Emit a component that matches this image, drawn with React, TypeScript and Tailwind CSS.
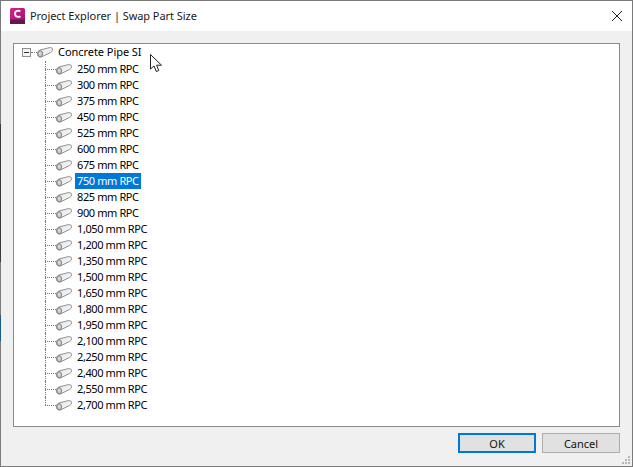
import React from "react";

const sizes = [
  "250", "300", "375", "450", "525", "600", "675", "750", "825", "900", "1,050",
  "1,200", "1,350", "1,500", "1,650", "1,800", "1,950", "2,100", "2,250", "2,400", "2,550", "2,700",
];

const PipeIcon = () => (
  <svg width="16" height="11" viewBox="0 0 16 11" className="shrink-0">
    <path d="M3 3 L12.5 0.6 C14.5 0.2 15.6 1.2 15.5 2.8 C15.4 4.2 14.6 5 13.5 5.5 L4.8 9.8 C2.6 10.6 0.5 9.6 0.5 7 C0.5 5 1.4 3.6 3 3 Z" fill="#efefef" stroke="#8f8f8f" strokeWidth="1" />
    <ellipse cx="3.2" cy="6.7" rx="2.4" ry="3" fill="#d2d2d2" stroke="#7a7a7a" strokeWidth="1" />
  </svg>
);

const Row = ({ size, last, selected }: { size: string; last: boolean; selected: boolean }) => (
  <div className="h-4 flex items-center ml-[31px]">
    <div className="relative w-[11px] h-4 shrink-0">
      <div className={`absolute left-0 top-0 border-l border-dotted border-[#777] ${last ? "h-2" : "h-4"}`} />
      <div className="absolute left-0 top-2 w-[11px] border-t border-dotted border-[#777]" />
    </div>
    <PipeIcon />
    <span className={`ml-[3px] h-4 px-[2px] leading-4 tracking-[-0.4px] whitespace-nowrap ${selected ? "bg-[#0078d7] text-white" : "text-black"}`}>
      {size} mm RPC
    </span>
  </div>
);

const App: React.FC = () => {
  return (
    <div className="relative w-[633px] h-[467px] flex flex-col bg-[#f0f0f0] border border-[#7a7a7a] text-[11px] font-['Noto_Sans',sans-serif]">
      <div className="h-[30px] shrink-0 bg-white flex items-center pl-[9px] pr-[10px]">
        <svg width="15" height="16" viewBox="0 0 15 16" className="shrink-0">
          <defs>
            <linearGradient id="civil" x1="0" y1="0" x2="1" y2="1">
              <stop offset="0" stopColor="#d0218c" />
              <stop offset="1" stopColor="#a5146a" />
            </linearGradient>
          </defs>
          <rect x="0" y="0" width="15" height="16" rx="1.5" fill="url(#civil)" />
          <rect x="0" y="11.5" width="15" height="4.5" fill="#5e1b49" />
          <path d="M10.4 3.4 C8.8 2.2 5 2.4 5 5.8 C5 9.2 8.8 9.4 10.4 8.2" fill="none" stroke="#fff" strokeWidth="1.8" />
        </svg>
        <span className="ml-[5px] tracking-[-0.06px] text-[#1a1a1a] whitespace-nowrap">Project Explorer | Swap Part Size</span>
        <svg width="10" height="10" viewBox="0 0 10 10" className="ml-auto">
          <path d="M0 0 L10 10 M10 0 L0 10" stroke="#222" strokeWidth="1" />
        </svg>
      </div>

      <div className="flex-1 flex flex-col px-[12px] pt-[12px] relative">
        <div className="h-[384px] bg-white border border-[#8a8a8a]">
          <div className="h-4 flex items-center pl-[8px] mb-px">
            <div className="w-[9px] h-[9px] border border-[#8e8f8f] bg-[#f4f4f4] flex items-center justify-center shrink-0">
              <div className="w-[5px] h-px bg-[#333]" />
            </div>
            <div className="w-[6px] border-t border-dotted border-[#777]" />
            <PipeIcon />
            <span className="ml-[5px] tracking-[-0.05px] text-black whitespace-nowrap">Concrete Pipe SI</span>
          </div>
          {sizes.map((s, i) => (
            <Row key={s} size={s} last={i === sizes.length - 1} selected={s === "750"} />
          ))}
        </div>

        <div className="flex justify-end gap-[6px] mt-[6px]">
          <button className="w-[78px] h-[20px] bg-[#e1e1e1] border-2 border-[#0078d7] text-[#111] leading-none">OK</button>
          <button className="w-[78px] h-[20px] bg-[#e1e1e1] border border-[#adadad] text-[#111] leading-none">Cancel</button>
        </div>

        <svg width="9" height="9" viewBox="0 0 9 9" className="absolute right-[1px] bottom-[1px]">
          <path d="M6 0h2v2H6zM3 3h2v2H3zM6 3h2v2H6zM0 6h2v2H0zM3 6h2v2H3zM6 6h2v2H6z" fill="#b8b8b8" />
        </svg>
      </div>

      {/* window behind shows through the 1px left edge */}
      <div className="absolute left-[-1px] top-[123px] w-px h-[138px] bg-[#3a3a3a]" />
      <div className="absolute left-[-1px] top-[314px] w-px h-[26px] bg-[#1a5a8a]" />

      <svg width="14" height="19" viewBox="0 0 14 19" className="absolute left-[149px] top-[53px]">
        <path d="M0.5 0.5 L0.5 15 L4 12 L6.3 17.5 L8.8 16.5 L6.6 11.2 L11.5 11.2 Z" fill="#fff" stroke="#222" strokeWidth="1" />
      </svg>
    </div>
  );
};

export default App;
